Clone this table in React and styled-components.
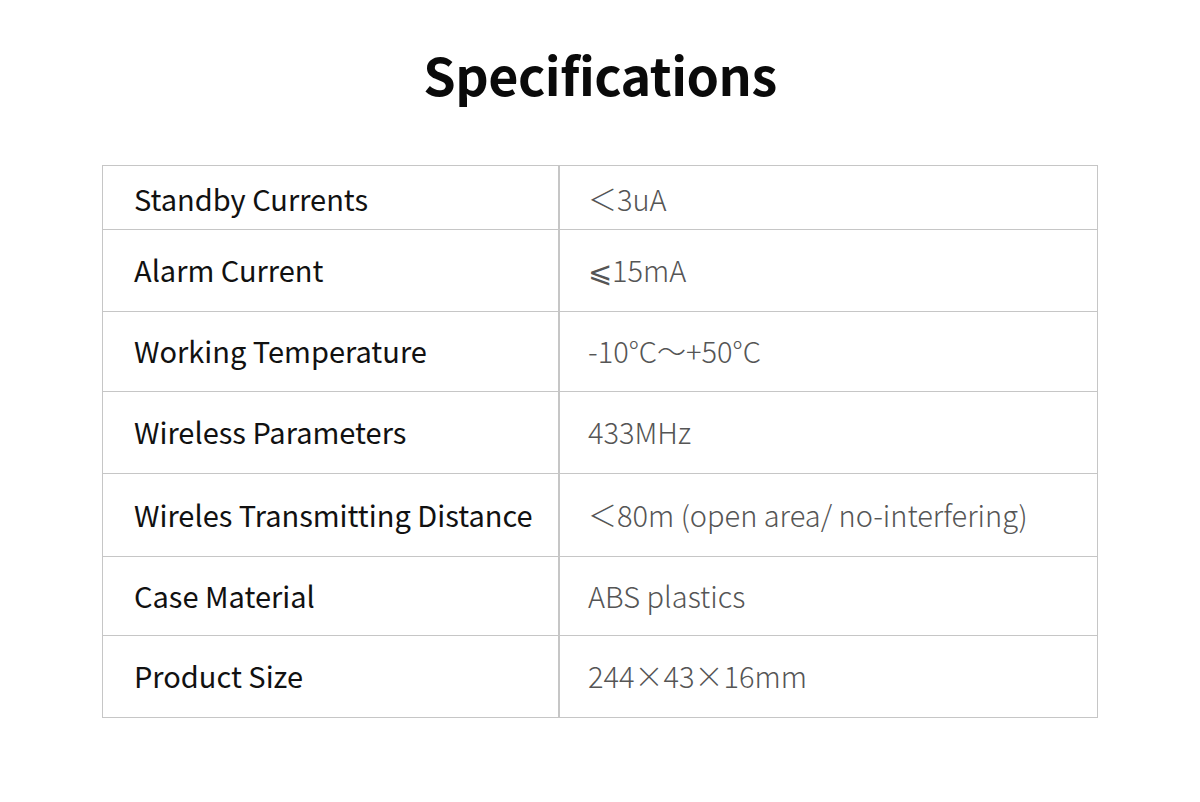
import styled, { createGlobalStyle } from "styled-components";

const GlobalStyle = createGlobalStyle`
  html, body {
    margin: 0;
    padding: 0;
    background: #ffffff;
  }
  body {
    font-family: "Noto Sans CJK SC", "Noto Sans", sans-serif;
  }
`;

const Page = styled.div`
  width: 1200px;
  height: 802px;
  display: flex;
  flex-direction: column;
  align-items: center;
  box-sizing: border-box;
  padding-top: 38px;
`;

const Title = styled.h1`
  margin: 0;
  height: 127px;
  font-family: "Noto Sans CJK SC", "Open Sans", sans-serif;
  font-weight: 700;
  font-size: 52px;
  line-height: 72px;
  color: #0a0a0a;
  letter-spacing: -0.5px;
`;

const Table = styled.div`
  width: 996px;
  display: flex;
  flex-direction: column;
  border: 1px solid #c6c6c6;
  box-sizing: border-box;
`;

const Row = styled.div`
  display: grid;
  grid-template-columns: 457px 1fr;
  height: ${(p) => p.$h}px;
  border-top: ${(p) => (p.$first ? "none" : "1px solid #c6c6c6")};
  box-sizing: border-box;
`;

const Label = styled.div`
  display: flex;
  align-items: center;
  padding: 0 0 ${(p) => (p.$first ? 0 : 3)}px 31px;
  border-right: 2px solid #c6c6c6;
  font-size: 29px;
  font-weight: 400;
  color: #111111;
`;

const Value = styled.div`
  display: flex;
  align-items: center;
  padding: 0 0 ${(p) => (p.$first ? 0 : 3)}px 28px;
  font-size: 29px;
  font-weight: 300;
  color: #555555;
`;

const specs = [
  ["Standby Currents", "＜3uA", 63],
  ["Alarm Current", "⩽15mA", 82],
  ["Working Temperature", "-10°C～+50°C", 80],
  ["Wireless Parameters", "433MHz", 82],
  ["Wireles Transmitting Distance", "＜80m (open area/ no-interfering)", 83],
  ["Case Material", "ABS plastics", 79],
  ["Product Size", "244×43×16mm", 82],
];

function App() {
  return (
    <>
      <GlobalStyle />
      <Page>
        <Title>Specifications</Title>
        <Table>
          {specs.map(([label, value, h], i) => (
            <Row key={label} $h={h} $first={i === 0}>
              <Label $first={i === 0}>{label}</Label>
              <Value $first={i === 0}>{value}</Value>
            </Row>
          ))}
        </Table>
      </Page>
    </>
  );
}

export default App;
